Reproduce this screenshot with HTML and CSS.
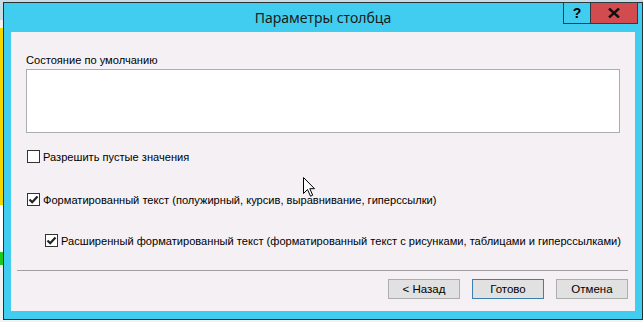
FILE: index.html
```html
<!DOCTYPE html>
<html lang="ru">
<head>
  <meta charset="UTF-8">
  <title>Параметры столбца</title>
  <link rel="stylesheet" href="styles.css">
</head>
<body>
  <div class="desk">
    <div class="dialog">
      <div class="titlebar">
        <div class="title">Параметры столбца</div>
        <div class="caption-btns">
          <div class="cap-help">?</div>
          <div class="cap-close">
            <svg width="12" height="10" viewBox="0 0 12 10"><path d="M1 0.5 L11 9.5 M11 0.5 L1 9.5" stroke="#111" stroke-width="2.4"/></svg>
          </div>
        </div>
      </div>

      <div class="client">
        <div class="content">
          <div class="field-label">Состояние по умолчанию</div>
          <div class="textbox"></div>

          <div class="check-row row-empty">
            <span class="box"></span>
            <span>Разрешить пустые значения</span>
          </div>

          <div class="check-row row-rich">
            <span class="box"><svg width="11" height="11" viewBox="0 0 11 11"><path d="M1.5 5.5 L4.2 8.2 L9.5 2.5" fill="none" stroke="#222" stroke-width="2.2"/></svg></span>
            <span>Форматированный текст (полужирный, курсив, выравнивание, гиперссылки)</span>
          </div>

          <div class="check-row row-ext">
            <span class="box"><svg width="11" height="11" viewBox="0 0 11 11"><path d="M1.5 5.5 L4.2 8.2 L9.5 2.5" fill="none" stroke="#222" stroke-width="2.2"/></svg></span>
            <span>Расширенный форматированный текст (форматированный текст с рисунками, таблицами и гиперссылками)</span>
          </div>
        </div>

        <div class="separator"></div>

        <div class="buttons">
          <button class="btn">&lt; Назад</button>
          <button class="btn btn-default">Готово</button>
          <button class="btn">Отмена</button>
        </div>
      </div>
    </div>

    <svg class="cursor" width="13" height="20" viewBox="0 0 13 20"><path d="M0.5 0.5 L0.5 16.5 L4.5 12.5 L7.5 19.2 L9.7 18.2 L6.8 11.7 L11.5 11.7 Z" fill="#fff" stroke="#000" stroke-width="1"/></svg>
  </div>
</body>
</html>
```

FILE: styles.css
```css
* { margin: 0; padding: 0; box-sizing: border-box; }
body { width: 643px; height: 322px; overflow: hidden; background: #c9dbe3; font-family: "Liberation Sans", Arial, sans-serif; font-size: 11.1px; color: #000; }
.desk { position: relative; height: 322px; padding: 2px 0 0 3px; background: linear-gradient(to bottom, #c9dbe3 0, #c9dbe3 20px, #f2f2f2 20px, #f2f2f2 28px, #f5d700 28px, #f5d700 205px, #ffffff 205px, #ffffff 252px, #1ec81e 252px, #1ec81e 265px, #f2f2f2 265px); }
.dialog { position: relative; width: 640px; height: 318px; background: #41cdf0; border: 1px solid #2a2f33; padding: 0 7px 8px 7px; display: flex; flex-direction: column; }
.titlebar { height: 29px; display: flex; align-items: center; justify-content: center; }
.title { font-family: "Noto Sans", "Open Sans", sans-serif; font-size: 14px; color: #1a1a1a; margin-top: -1px; }
.caption-btns { position: absolute; top: -1px; right: 4px; display: flex; height: 22px; border: 1px solid #2f3a40; }
.cap-help { width: 27px; display: flex; align-items: center; justify-content: center; font-weight: bold; font-size: 14px; border-right: 1px solid #2f3a40; }
.cap-close { width: 46px; background: #d24b4e; display: flex; align-items: center; justify-content: center; }
.client { flex: 1; background: #f5f0f4; display: flex; flex-direction: column; }
.content { padding: 20px 15px 0 15px; }
.field-label { line-height: 16px; height: 16px; margin-bottom: 1px; }
.textbox { height: 64px; background: #fff; border: 1px solid #abadb3; }
.check-row { display: flex; align-items: center; gap: 3px; height: 13px; padding-left: 1px; white-space: nowrap; }
.box { width: 13px; height: 13px; border: 1px solid #333; background: #fff; display: flex; align-items: center; justify-content: center; flex-shrink: 0; }
.row-empty { margin-top: 17px; }
.row-rich { margin-top: 30px; }
.row-ext { margin-top: 28px; padding-left: 19px; }
.separator { height: 1px; background: #a0a0a0; margin: 23px 7px 0 6px; }
.buttons { display: flex; justify-content: flex-end; gap: 12px; padding: 8px 7px 0 0; }
.btn { width: 72px; height: 20px; background: #e1e1e1; border: 1px solid #adadad; font-family: inherit; font-size: 11.5px; color: #000; }
.btn-default { border-color: #3c7fb1; }
.cursor { position: absolute; left: 303px; top: 177px; }
```
